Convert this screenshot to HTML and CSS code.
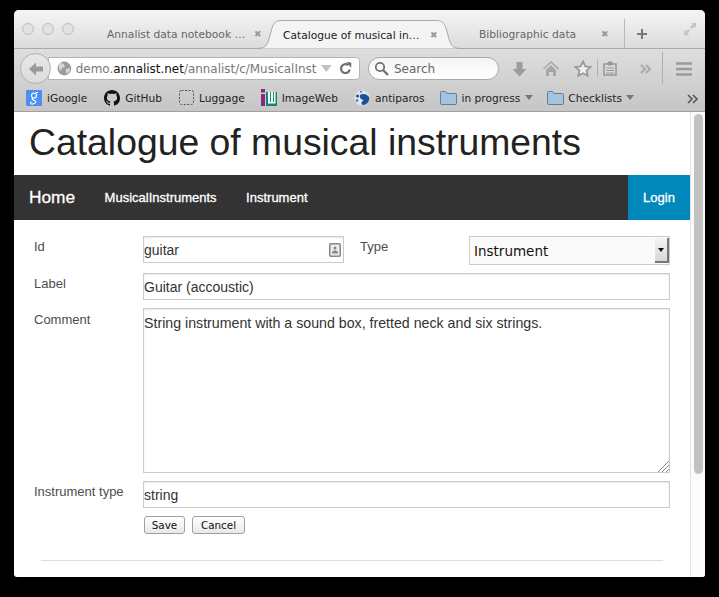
FILE: index.html
```html
<!DOCTYPE html>
<html lang="en">
<head>
  <meta charset="UTF-8" />
  <title>Catalogue of musical instruments</title>
  <link rel="stylesheet" href="styles.css">
</head>
<body>
  <div class="window">

    <div class="tabbar">
      <div class="lights"><i></i><i></i><i></i></div>
      <div class="tab tab-first"><span class="tab-title">Annalist data notebook …</span><span class="tab-close">✖</span></div>
      <div class="tab tab-active">
        <svg class="tab-shape" width="206" height="30" viewBox="0 0 206 30"><path d="M0 28.5C9 28.5 11 26 13 19L16 8C17.5 3 20 .5 26 .5H180C186 .5 188.500 3 190 8L193 19C195 26 197 28.500 206 28.500" fill="#f4f4f4" stroke="#a8a8a8"/></svg>
        <span class="tab-title">Catalogue of musical in…</span><span class="tab-close">✖</span>
      </div>
      <div class="tab tab-last"><span class="tab-title">Bibliographic data</span><span class="tab-close">✖</span></div>
      <div class="tab-new">
        <svg width="14" height="14" viewBox="0 0 14 14"><path d="M7 2v10M2 7h10" stroke="#777" stroke-width="2"/></svg>
      </div>
      <svg class="fullscreen" width="14" height="14" viewBox="0 0 16 16"><path d="M9 1h6v6l-2-2-3 3-2-2 3-3zM7 15H1V9l2 2 3-3 2 2-3 3z" fill="#c4c4c4"/></svg>
    </div>

    <div class="navbar">
      <div class="back">
        <svg width="16" height="16" viewBox="0 0 16 16"><path d="M8 1.500 1 8l7 6.500V10.500h7v-5H8z" fill="#9a9a9a"/></svg>
      </div>
      <div class="urlbar">
        <svg width="15" height="15" viewBox="0 0 15 15"><circle cx="7.500" cy="7.500" r="7" fill="#9b9b9b"/><path d="M4 2l3 1 1 3-3 1-1 3-2-2V4zM9 8l4-1 0 3-3 3-1-2z" fill="#d6d6d6"/></svg>
        <span class="url">demo.<b>annalist.net</b>/annalist/c/MusicalInst</span>
        <svg class="url-drop" width="11" height="7" viewBox="0 0 11 7"><path d="M0 0h11L5.500 7z" fill="#c2c2c2"/></svg>
        <svg width="13" height="13" viewBox="0 0 13 13"><path d="M11 7.500A4.500 4.500 0 1 1 9.500 3.200" fill="none" stroke="#6f6f6f" stroke-width="2.200"/><path d="M7.500 0l5 .5V6z" fill="#6f6f6f"/></svg>
      </div>
      <div class="searchbar">
        <svg width="15" height="15" viewBox="0 0 15 15"><circle cx="6" cy="6" r="4.200" fill="none" stroke="#707070" stroke-width="1.800"/><path d="M9 9l5 5" stroke="#707070" stroke-width="2.400"/></svg>
        <span>Search</span>
      </div>
      <div class="tools">
        <svg class="tool-download" width="15" height="16" viewBox="0 0 15 16"><path d="M4.500 1h6v7h4l-7 7.500L.5 8h4z" fill="#9c9c9c"/></svg>
        <svg class="tool-home" width="16" height="15" viewBox="0 0 16 15"><path d="M8 0 0 7.500l1 1L8 2l7 6.500 1-1zM3 9l5-5 5 5v6h-3v-4H6v4H3z" fill="#a6a6a6"/></svg>
        <svg class="tool-star" width="18" height="17" viewBox="0 0 18 17"><path d="M9 1.500l2.300 5 5.200.6-3.900 3.500 1.100 5.200L9 13.200l-4.700 2.600 1.100-5.200-3.900-3.500 5.200-.6z" fill="#efefef" stroke="#9a9a9a" stroke-width="1.800"/></svg>
        <span class="tool-sep"></span>
        <svg class="tool-clip" width="14" height="15" viewBox="0 0 14 15"><path d="M1 3h12v11H1z" fill="#dadada" stroke="#989898" stroke-width="1.600"/><path d="M5 1h4v3H5zM3 7h8M3 9.500h8M3 12h8" fill="#989898" stroke="#989898"/></svg>
        <svg class="tool-more" width="12" height="10" viewBox="0 0 12 10"><path d="M1 1l4 4-4 4M6 1l4 4-4 4" fill="none" stroke="#aaa" stroke-width="2"/></svg>
        <span class="tool-sep tool-sep-tall"></span>
        <svg class="tool-menu" width="16" height="14" viewBox="0 0 16 14"><path d="M0 1.500h16M0 7h16M0 12.500h16" stroke="#9a9a9a" stroke-width="2.600"/></svg>
      </div>
    </div>

    <div class="bookmarks">
      <span class="bookmark">
        <svg class="mark-google" width="16" height="16" viewBox="0 0 16 16"><rect width="16" height="16" rx="1" fill="#4d8ef0"/><circle cx="8" cy="5.500" r="2.500" fill="none" stroke="#fff" stroke-width="1.200"/><path d="M10 2.500h2M7 8c-2 1 0 2 1.500 2.500S11 12 8 13.500 4 13 5 11.500" fill="none" stroke="#fff" stroke-width="1.200"/></svg>
        iGoogle
      </span>
      <span class="bookmark bookmark-github">
        <svg width="16" height="16" viewBox="0 0 16 16"><path d="M8 0C3.580 0 0 3.580 0 8c0 3.540 2.290 6.530 5.470 7.590.4.070.55-.17.55-.38 0-.19-.01-.82-.01-1.490-2.010.37-2.530-.49-2.690-.94-.09-.23-.48-.94-.82-1.130-.28-.15-.68-.52-.01-.53.63-.01 1.080.58 1.230.82.72 1.210 1.870.87 2.330.66.070-.52.28-.87.51-1.070-1.780-.2-3.640-.89-3.640-3.950 0-.87.31-1.590.82-2.150-.08-.2-.36-1.020.08-2.120 0 0 .67-.21 2.200.82.64-.18 1.320-.27 2-.27.68 0 1.360.09 2 .27 1.530-1.040 2.200-.82 2.200-.82.44 1.100.16 1.920.08 2.120.51.56.82 1.270.82 2.150 0 3.070-1.870 3.750-3.650 3.950.29.25.54.73.54 1.480 0 1.070-.01 1.930-.01 2.200 0 .21.15.46.55.38A8.013 8.013 0 0 0 16 8c0-4.420-3.580-8-8-8z" fill="#111"/></svg>
        GitHub
      </span>
      <span class="bookmark bookmark-luggage">
        <svg width="15" height="16" viewBox="0 0 15 16"><rect x=".5" y=".5" width="14" height="14" rx="2" fill="none" stroke="#555" stroke-dasharray="2 1.500"/></svg>
        Luggage
      </span>
      <span class="bookmark">
        <svg width="17" height="17" viewBox="0 0 17 17"><rect x="1" y="0" width="4" height="3.500" fill="#8a2a7c"/><rect x="1" y="5" width="4" height="12" fill="#8a2a7c"/><path d="M6 3h11v14H6z" fill="#0f8a72"/><path d="M8 3h2v10h1V3h2v10h1V3h1.500v11.500H8z" fill="#fff"/></svg>
        ImageWeb
      </span>
      <span class="bookmark">
        <svg width="16" height="16" viewBox="0 0 16 16"><circle cx="8" cy="8" r="7.500" fill="#dfe6ee"/><path d="M6 5c3-2 7-1 9 2 1 4-2 8-6 8-3-1-1-4 1-5-2 0-5-2-4-5z" fill="#1d4f96"/><circle cx="3.500" cy="6" r="1.500" fill="#1d4f96"/><circle cx="3" cy="10.500" r="1.200" fill="#3d77b8"/><circle cx="7" cy="1.800" r="1" fill="#3d77b8"/></svg>
        antiparos
      </span>
      <span class="bookmark bookmark-progress">
        <svg width="17" height="14" viewBox="0 0 17 14"><path d="M.5 1.500a1 1 0 0 1 1-1h4l1.500 2h8.500a1 1 0 0 1 1 1v9a1 1 0 0 1-1 1h-14a1 1 0 0 1-1-1z" fill="#a4c3de" stroke="#5d7f9e"/></svg>
        in progress
        <svg width="8" height="5" viewBox="0 0 8 5"><path d="M0 0h8L4 5z" fill="#777"/></svg>
      </span>
      <span class="bookmark bookmark-checklists">
        <svg width="17" height="14" viewBox="0 0 17 14"><path d="M.5 1.500a1 1 0 0 1 1-1h4l1.500 2h8.500a1 1 0 0 1 1 1v9a1 1 0 0 1-1 1h-14a1 1 0 0 1-1-1z" fill="#a4c3de" stroke="#5d7f9e"/></svg>
        Checklists
        <svg width="8" height="5" viewBox="0 0 8 5"><path d="M0 0h8L4 5z" fill="#777"/></svg>
      </span>
      <svg class="bookmarks-more" width="12" height="10" viewBox="0 0 12 10"><path d="M1 1l4 4-4 4M6 1l4 4-4 4" fill="none" stroke="#555" stroke-width="1.600"/></svg>
    </div>

    <div class="viewport">
      <div class="page">
        <h1>Catalogue of musical instruments</h1>

        <div class="topbar">
          <a class="brand">Home</a>
          <a class="nav-link">MusicalInstruments</a>
          <a class="nav-link">Instrument</a>
          <a class="login">Login</a>
        </div>

        <form class="entity-form">
          <div class="row row-first">
            <label class="field-label">Id</label>
            <div class="id-box">
              <input class="field id-input" type="text" value="guitar">
              <svg class="id-icon" width="12" height="14" viewBox="0 0 12 14"><rect x=".75" y=".75" width="10.500" height="12.500" rx="1" fill="#ececec" stroke="#888" stroke-width="1.500"/><circle cx="6" cy="5" r="1.500" fill="#888"/><path d="M3 10.500h6V9L7 7.500H5L3 9z" fill="#888"/></svg>
            </div>
            <label class="field-label type-label">Type</label>
            <div class="select-box">
              <select class="type-select"><option>Instrument</option></select>
              <span class="select-arrow"></span>
            </div>
          </div>
          <div class="row">
            <label class="field-label">Label</label>
            <input class="field" type="text" value="Guitar (accoustic)">
          </div>
          <div class="row">
            <label class="field-label label-comment">Comment</label>
            <div class="comment-box">
              <textarea class="field comment">String instrument with a sound box, fretted neck and six strings.</textarea>
              <svg class="resizer" width="11" height="11" viewBox="0 0 11 11"><path d="M0 11 11 0M4 11l7-7M8 11l3-3" stroke="#888"/></svg>
            </div>
          </div>
          <div class="row">
            <label class="field-label">Instrument type</label>
            <input class="field" type="text" value="string">
          </div>
          <div class="buttons">
            <button type="button" class="btn-save">Save</button>
            <button type="button" class="btn-cancel">Cancel</button>
          </div>
        </form>

        <hr class="rule">
      </div>
      <div class="scrollbar"><div class="thumb"></div></div>
    </div>

  </div>
</body>
</html>
```

FILE: styles.css
```css
html, body {
  margin: 0;
  height: 100%;
}

body {
  background: #000;
  padding: 10px 14px 20px;
  box-sizing: border-box;
  overflow: hidden;
  font-family: "DejaVu Sans", sans-serif;
}

.window {
  width: 691px;
  height: 567px;
  border-radius: 5px 5px 3px 3px;
  overflow: hidden;
  display: flex;
  flex-direction: column;
  background: #fff;
}

/* tab strip */
.tabbar {
  height: 39px;
  box-sizing: border-box;
  display: flex;
  align-items: flex-end;
  position: relative;
  background: linear-gradient(#f5f5f5, #dcdcdc);
  border-bottom: 1px solid #a8a8a8;
  font-size: 10.7px;
  color: #666;
}

.lights {
  display: flex;
  gap: 8px;
  width: 93px;
  padding-left: 8px;
  box-sizing: border-box;
  align-self: flex-start;
  margin-top: 13px;
}

.lights i {
  width: 10px;
  height: 10px;
  border-radius: 50%;
  border: 1px solid #bdbdbd;
  background: #e2e2e2;
}

.tab {
  height: 29px;
  display: flex;
  align-items: center;
  position: relative;
  box-sizing: border-box;
  padding-top: 1px;
  white-space: nowrap;
}

.tab-first {
  width: 149px;
}

.tab-first .tab-title,
.tab-active .tab-title {
  width: 147px;
}

.tab-active {
  width: 206px;
  padding-left: 27px;
  margin-bottom: -1px;
  color: #222;
}

.tab-shape {
  position: absolute;
  left: 0;
  top: 0;
}

.tab-title {
  position: relative;
  display: inline-block;
  flex: none;
}

.tab-close {
  position: relative;
  flex: none;
  font-size: 9px;
  color: #999;
}

.tab-last {
  width: 163px;
  padding-left: 17px;
  border-right: 1px solid #b8b8b8;
}

.tab-last .tab-title {
  width: 122px;
}

.tab-new {
  width: 34px;
  height: 28px;
  display: flex;
  align-items: center;
  justify-content: center;
}

.fullscreen {
  position: absolute;
  right: 8px;
  top: 12px;
}

/* url bar row */
.navbar {
  height: 35px;
  display: flex;
  align-items: center;
  position: relative;
  background: linear-gradient(#dedede, #d0d0d0);
  box-sizing: border-box;
  padding-left: 34px;
  font-size: 12px;
}

.back {
  position: absolute;
  left: 6px;
  top: 4px;
  width: 29px;
  height: 29px;
  border-radius: 50%;
  border: 1px solid #b0b0b0;
  background: linear-gradient(#e8e8e8, #dcdcdc);
  display: flex;
  align-items: center;
  justify-content: center;
  z-index: 1;
}

.urlbar {
  width: 312px;
  height: 23px;
  margin-top: 4px;
  box-sizing: border-box;
  border: 1px solid #b4b4b4;
  border-radius: 0 4px 4px 0;
  background: #fff;
  display: flex;
  align-items: center;
  padding: 0 7px 0 8px;
  color: #777;
  white-space: nowrap;
}

.url {
  margin-left: 4px;
  width: 246px;
  font-size: 11.95px;
}

.url b {
  font-weight: normal;
  color: #111;
}

.url-drop {
  margin: 0 7px 0 4px;
}

.searchbar {
  width: 131px;
  height: 23px;
  margin-top: 4px;
  margin-left: 8px;
  box-sizing: border-box;
  border: 1px solid #aaa;
  border-radius: 12px;
  background: linear-gradient(#f4f4f4, #fff);
  display: flex;
  align-items: center;
  gap: 5px;
  padding-left: 5px;
  color: #666;
}

.tools {
  flex: 1;
  display: flex;
  align-items: center;
  height: 100%;
  position: relative;
  margin-top: 4px;
}

.tool-download { margin-left: 13px; }
.tool-home { margin-left: 16px; }
.tool-star { margin-left: 15px; }
.tool-clip { margin-left: 5px; }
.tool-more { margin-left: 23px; }
.tool-menu { margin-left: 13px; }

.tool-sep {
  width: 1px;
  height: 17px;
  margin-left: 5px;
  background: #b0b0b0;
}

.tool-sep-tall {
  height: 34px;
  margin-left: 10px;
}

/* bookmarks */
.bookmarks {
  height: 28px;
  box-sizing: border-box;
  display: flex;
  align-items: center;
  position: relative;
  padding-left: 12px;
  gap: 16px;
  background: linear-gradient(#d0d0d0, #c6c6c6);
  border-bottom: 1px solid #a0a0a0;
  font-size: 10.6px;
  color: #222;
  white-space: nowrap;
}

.bookmark {
  display: flex;
  align-items: center;
  gap: 5px;
}

.bookmark-github { margin-left: 1px; }
.bookmark-luggage { margin: 0 -1px 0 1px; }
.bookmark-progress { margin-left: -1px; }
.bookmark-checklists { margin-left: -2px; gap: 4px; }

.bookmarks-more {
  position: absolute;
  right: 6px;
  top: 10px;
}

/* page */
.viewport {
  flex: 1;
  min-height: 0;
  display: flex;
}

.page {
  width: 676px;
  overflow: hidden;
  flex: none;
}

h1 {
  margin: 0;
  height: 63px;
  padding: 9px 0 0 15px;
  box-sizing: border-box;
  font: 37.35px/43px "Liberation Sans", Arial, sans-serif;
  color: #222;
}

.topbar {
  height: 45px;
  display: flex;
  align-items: center;
  background: #333;
  font-family: "Liberation Sans", Arial, sans-serif;
  color: #fff;
  font-size: 13px;
  -webkit-text-stroke: 0.3px #fff;
}

.brand {
  margin-left: 15px;
  font-size: 17.3px;
}

.nav-link {
  margin-left: 29.5px;
}

.login {
  margin-left: auto;
  width: 62px;
  height: 100%;
  display: flex;
  align-items: center;
  justify-content: center;
  background: #0088bb;
}

.entity-form {
  padding: 16px 20px 0;
  font-family: "Liberation Sans", Arial, sans-serif;
}

.row {
  display: flex;
  align-items: flex-start;
  margin-bottom: 8px;
}

.row-first {
  height: 29px;
}

.field-label {
  width: 109px;
  flex: none;
  padding-top: 3px;
  font-size: 13px;
  line-height: 15px;
  color: #4d4d4d;
}

.label-comment {
  padding-top: 4px;
}

.field {
  flex: 1;
  min-width: 0;
  height: 27px;
  margin: 0;
  box-sizing: border-box;
  padding: 0;
  border: 1px solid #ccc;
  box-shadow: inset 0 1px 2px rgba(0,0,0,0.1);
  background: #fff;
  font: 14px "Liberation Sans", Arial, sans-serif;
  color: #333;
  outline: none;
}

.comment-box {
  flex: 1;
  height: 165px;
  position: relative;
}

.comment {
  display: block;
  width: 100%;
  height: 100%;
  resize: none;
  padding-top: 6px;
  font-size: 14.2px;
  line-height: 16px;
}

.resizer {
  position: absolute;
  right: 1px;
  bottom: 1px;
  pointer-events: none;
}

.id-box {
  width: 201px;
  height: 27px;
  flex: none;
  display: flex;
  position: relative;
}

.id-icon {
  position: absolute;
  right: 3px;
  top: 7px;
}

.type-label {
  width: 109px;
  margin-left: 16px;
}

.select-box {
  width: 201px;
  height: 29px;
  flex: none;
  position: relative;
}

.type-select {
  width: 100%;
  height: 100%;
  margin: 0;
  padding: 0 0 0 4px;
  box-sizing: border-box;
  appearance: none;
  border: 1px solid #ccc;
  border-radius: 0;
  background: #fafafa;
  font: 13.5px "DejaVu Sans", sans-serif;
  color: #111;
}

.select-arrow {
  position: absolute;
  right: 1px;
  top: 2px;
  width: 14px;
  height: 25px;
  box-sizing: border-box;
  background: linear-gradient(#f4f4f4, #d8d8d8);
  border-right: 2px solid #777;
  border-bottom: 2px solid #777;
  pointer-events: none;
}

.select-arrow::after {
  content: "";
  position: absolute;
  left: 3px;
  top: 10px;
  border: 3px solid transparent;
  border-top: 4px solid #111;
  border-bottom: 0;
}

.buttons {
  display: flex;
  gap: 7px;
  margin: 8px 0 0 110px;
}

.buttons button {
  height: 18px;
  border: 1px solid #a0a0a0;
  border-radius: 3px;
  background: linear-gradient(#fff, #e8e8e8);
  font: 10.4px "DejaVu Sans", sans-serif;
  color: #111;
}

.btn-save {
  width: 41px;
  padding: 0;
}

.btn-cancel {
  width: 53px;
  padding: 0;
}

.rule {
  margin: 26px 27px 0;
  border: 0;
  border-top: 1px solid #ddd;
}

.scrollbar {
  flex: 1;
  background: #fbfbfb;
  border-left: 1px solid #e4e4e4;
  padding: 2px 2px 0 3px;
}

.thumb {
  height: 360px;
  border-radius: 5px;
  background: #c2c2c2;
}
```
